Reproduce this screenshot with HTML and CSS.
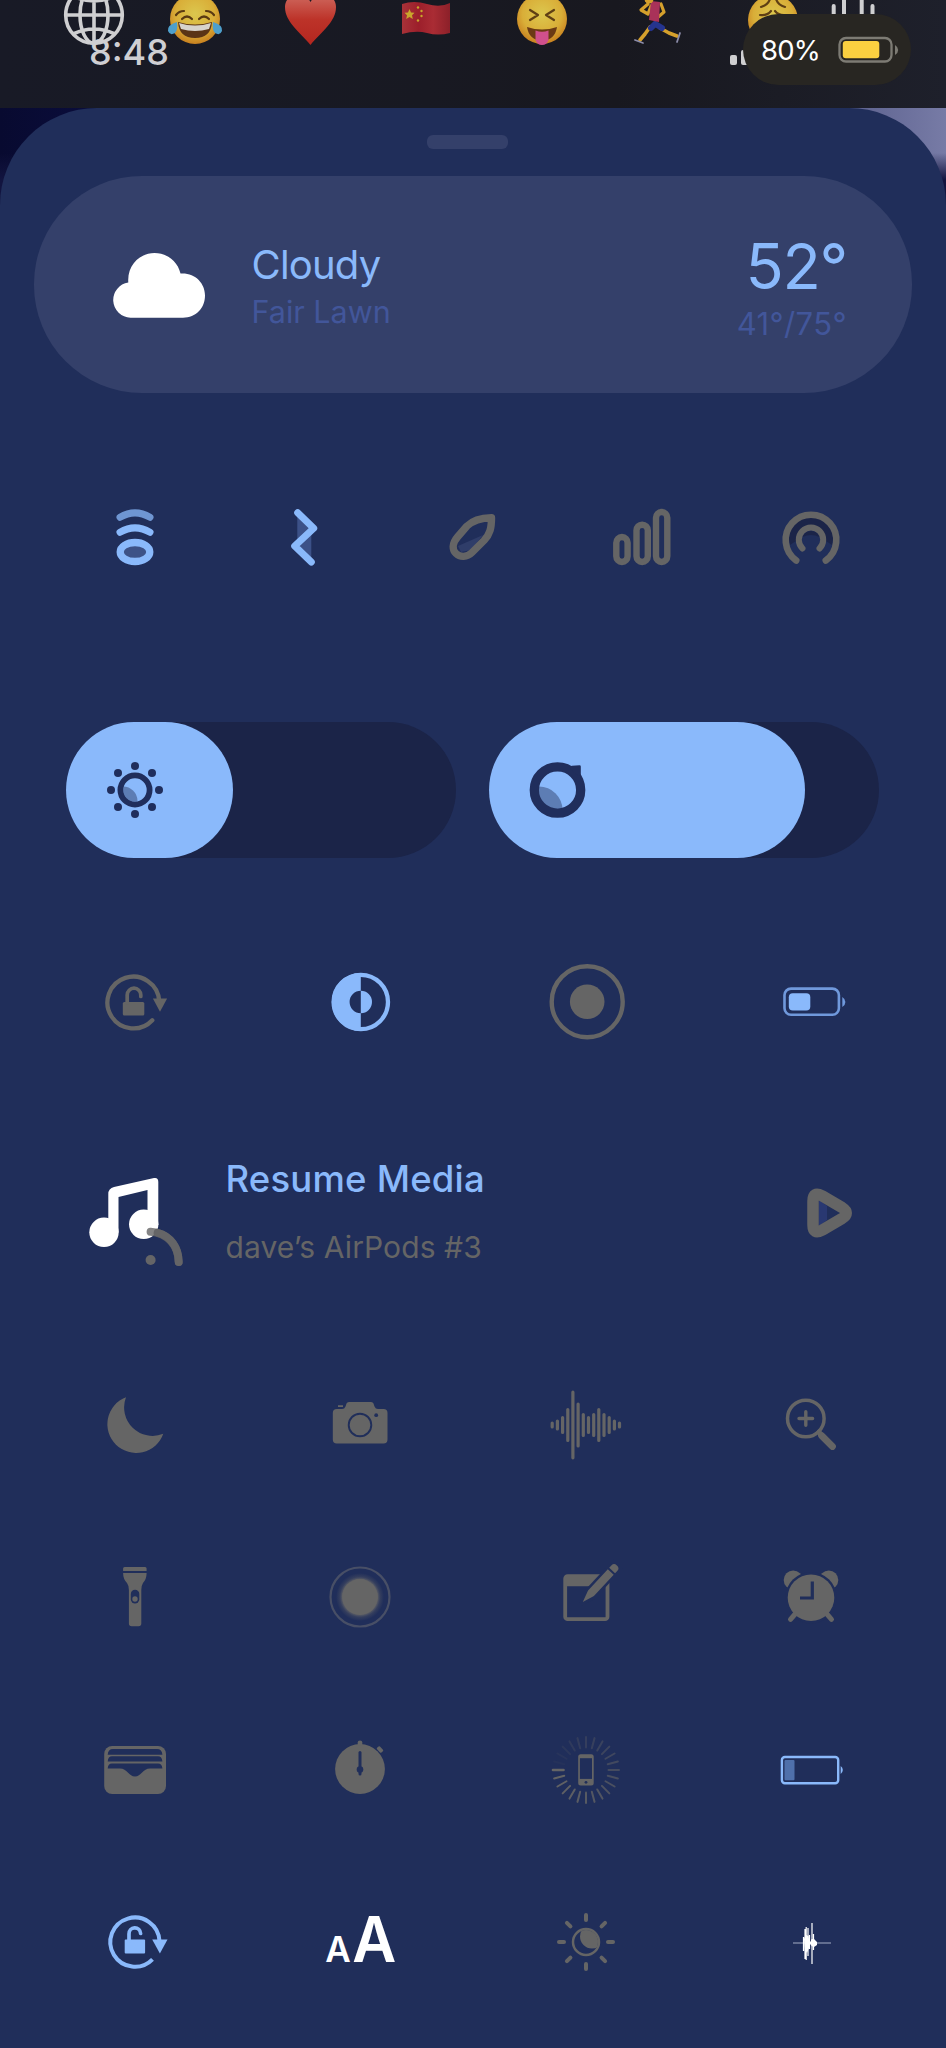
FILE: index.html
```html
<!DOCTYPE html>
<html lang="en">
<head>
<meta charset="utf-8">
<title>Control Center</title>
<link rel="stylesheet" href="styles.css">
</head>
<body>
<div class="screen">
  <header class="topbar">
    <svg class="emoji-strip" width="946" height="85" viewBox="0 0 946 85">
      <defs>
        <radialGradient id="face" cx=".5" cy=".4" r=".6"><stop offset="0" stop-color="#dcc74e"/><stop offset=".65" stop-color="#d9ae38"/><stop offset="1" stop-color="#c8801f"/></radialGradient>
        <linearGradient id="heart" x1="0" y1="0" x2="0" y2="1"><stop offset="0" stop-color="#cf6a60"/><stop offset=".5" stop-color="#bd3329"/><stop offset="1" stop-color="#b3261f"/></linearGradient>
        <linearGradient id="flag" x1="0" y1="0" x2="1" y2="0"><stop offset="0" stop-color="#a83238"/><stop offset=".35" stop-color="#9c1f2b"/><stop offset=".65" stop-color="#aa2c34"/><stop offset="1" stop-color="#8c2029"/></linearGradient>
      </defs>
      <g fill="none" stroke="#cfcfd1" stroke-width="3.6">
        <circle cx="94" cy="15" r="28.3"/>
        <ellipse cx="94" cy="15" rx="14" ry="28.3"/>
        <path d="M94 -14V43M65 15H123M73 34Q94 24 115 34M73 -4Q94 6 115 -4"/>
      </g>
      <circle cx="195" cy="19" r="25" fill="url(#face)"/>
      <path d="M178 22Q195 27 212 22Q211 38 195 38Q179 38 178 22Z" fill="#5a3416"/>
      <path d="M179 23Q195 28 211 23L209 29Q195 33 181 29Z" fill="#d7d3cc"/>
      <g fill="none" stroke="#5a3a12" stroke-width="2.2" stroke-linecap="round"><path d="M182 19Q187 14 192 19M199 19Q204 14 209 19M176 15Q179 11 184 11M206 11Q211 11 214 15"/></g>
      <path d="M177 22Q167 25 168 31Q170 36 175 33Q178 30 177 22ZM213 22Q223 25 222 31Q220 36 215 33Q212 30 213 22Z" fill="#4e9fcb"/>
      <path d="M310.500 45C300 32 285 22 285 7C285 -6 303 -12 310.500 2C318 -12 336 -6 336 7C336 22 321 32 310.500 45Z" fill="url(#heart)"/>
      <path d="M402 4Q414 0 427 4T450 3V33Q438 36 427 33T402 34Z" fill="url(#flag)"/>
      <path d="M409.500 9L411 12.500L414.500 12.800L412 15.200L412.800 19L409.500 17L406.200 19L407 15.200L404.500 12.800L408 12.500Z" fill="#c9a62c"/>
      <g fill="#c9a62c"><circle cx="418" cy="7.500" r="1.200"/><circle cx="421.500" cy="11" r="1.200"/><circle cx="421.500" cy="16" r="1.200"/><circle cx="418" cy="20.500" r="1.200"/></g>
      <circle cx="542" cy="19" r="25" fill="url(#face)"/>
      <path d="M527 27Q542 32 557 27Q555 40 542 41Q529 40 527 27Z" fill="#6b3a14"/>
      <path d="M535.500 30.500Q542 33 548.500 30.500V40Q547 45 542 45Q537 45 535.500 40Z" fill="#d0508c"/>
      <path d="M530 10L538 15L530 20M554 10L546 15L554 20" fill="none" stroke="#5f3f14" stroke-width="2.200" stroke-linecap="round" stroke-linejoin="round"/>
      <g fill="none" stroke-linecap="round" stroke-linejoin="round">
        <path d="M648 4L641 10L648 14L651 6M661 4L664 12L657 18" stroke="#d5a02c" stroke-width="3.200"/>
        <path d="M650 27L645 34L640 40M660 28L669 33L677 36" stroke="#d5a02c" stroke-width="3.600"/>
        <path d="M655 24L651 28M657 25L662 28" stroke="#25348e" stroke-width="6"/>
        <path d="M635 40L643 43M680 33L677 42" stroke="#8b8ba8" stroke-width="1.800"/>
      </g>
      <path d="M651 1L660 2L659 22L649 20Z" fill="#a93259"/><circle cx="649" cy="-1" r="4.500" fill="#d5a02c"/>
      <circle cx="773" cy="20" r="25" fill="url(#face)"/>
      <path d="M761 7Q768 5 770 -1M785 7Q778 5 776 -1M760 15Q767 16 771 11M786 15Q779 16 775 11" fill="none" stroke="#5f3f14" stroke-width="2.200" stroke-linecap="round"/>
      <path d="M833.700 6V30M844 -4V30M861.700 -4V30M872.500 6V30" stroke="#cfcfd1" stroke-width="4" stroke-linecap="round"/>
    </svg>
    <div class="clock">8:48</div>
    <div class="power">
      <svg class="cell" width="24" height="16" viewBox="0 0 24 16"><rect x="0" y="6" width="7" height="10" rx="2"/><rect x="11" y="1" width="7" height="15" rx="2"/></svg>
      <div class="pill">
        <span>80%</span>
        <svg width="62" height="28" viewBox="0 0 62 28"><rect x="2.500" y="2" width="52" height="23.500" rx="6.500" fill="none" stroke="#7d7b74" stroke-width="2.300"/><rect x="5.800" y="5" width="36.500" height="17.300" rx="3" fill="#fbd040"/><path d="M58 9Q61.200 11 61.200 14T58 19Z" fill="#7d7b74"/></svg>
      </div>
    </div>
  </header>

  <div class="wallpaper">
  <main class="sheet">
    <div class="handle"></div>

    <section class="weather">
      <svg width="94" height="66" viewBox="112 251 94 66"><path d="M130.500 316.700A17.700 17.700 0 0 1 128.300 281.500C127 264 140 252 154.500 252C167 252 177.500 260 180.500 272.500C195 271.500 205 282 205 294.500C205 307 196 316.700 183 316.700Z" fill="#fff"/></svg>
      <div class="place"><div class="condition">Cloudy</div><div class="town">Fair Lawn</div></div>
      <div class="temps"><div class="now">52°</div><div class="range">41°/75°</div></div>
    </section>

    <section class="connections">
      <svg class="icon on" viewBox="-40 -40 80 80"><g fill="none" stroke="currentColor" stroke-width="7" stroke-linecap="round"><path d="M-15 -19.700Q0 -28.500 15 -19.700" opacity=".75"/><path d="M-15 -4.700Q0 -13.500 15 -4.700"/><ellipse cx="0" cy="15" rx="14.800" ry="9.500" stroke-width="7.300" fill="#3d5287"/></g></svg>
      <svg class="icon on" viewBox="-40 -40 80 80"><path d="M-6.700 -22L9 -8.700L-6.700 6ZM7.300 -6V24L-9 9Z" fill="#3c5188"/><path d="M-6.300 -24.300L9.700 -8.700L-9.300 9L7.300 25" fill="none" stroke="currentColor" stroke-width="7" stroke-linecap="round" stroke-linejoin="round"/></svg>
      <svg class="icon" viewBox="-40 -40 80 80"><path d="M-15 9L10 -2L-2 13L-12 15Z" fill="#2f3d69"/><path d="M18.500 -19.300C8 -19 0 -17 -6 -11L-15.500 0C-21.500 7 -20.500 13 -17 16.500C-13 20.500 -6 20.500 -1 15.500L11 3.500C17 -3 18.500 -9 18.500 -19.300Z" fill="none" stroke="currentColor" stroke-width="7.400" stroke-linejoin="round"/></svg>
      <svg class="icon" viewBox="-40 -40 80 80"><g fill="none" stroke="currentColor" stroke-width="6.400"><rect x="-25.700" y="0" width="11.300" height="25" rx="5.650"/><rect x="-5.500" y="-12.300" width="11.300" height="37.300" rx="5.650"/><rect x="14" y="-25" width="11.300" height="50" rx="5.650"/></g></svg>
      <svg class="icon" viewBox="-40 -40 80 80"><path d="M-21 8A22 22 0 1 1 21 8L15 4A15 15 0 0 0 -15 4Z" fill="#1b2448"/><path d="M-8.500 0A9 9 0 0 1 8.500 0Q0 -4 -8.500 0Z" fill="#1b2448"/><g fill="none" stroke="currentColor" stroke-width="6.600" stroke-linecap="round"><path d="M-14.800 23.500A25.300 25.300 0 1 1 14.800 23.500"/><path d="M-8.500 11.500A12.200 12.200 0 1 1 8.500 11.500" stroke-width="6"/></g></svg>
    </section>

    <section class="sliders">
      <div class="slider"><div class="level" style="width:167px">
        <svg class="icon" viewBox="-40 -40 80 80"><clipPath id="sunc"><circle r="11.700"/></clipPath><circle cx="-12" cy="11" r="14.500" fill="#5d7db4" clip-path="url(#sunc)"/><circle r="14.600" fill="none" stroke="currentColor" stroke-width="5.800"/><g fill="currentColor"><circle cy="-24" r="4"/><circle cy="24" r="4"/><circle cx="-24" r="4"/><circle cx="24" r="4"/><circle cx="-17" cy="-17" r="4"/><circle cx="17" cy="-17" r="4"/><circle cx="-17" cy="17" r="4"/><circle cx="17" cy="17" r="4"/></g></svg>
      </div></div>
      <div class="slider"><div class="level" style="width:316px">
        <svg class="icon" viewBox="-40 -40 80 80"><clipPath id="volc"><circle r="18.700"/></clipPath><circle cx="-18" cy="20" r="23.500" fill="#5d7db4" clip-path="url(#volc)"/><circle cx=".5" r="23.200" fill="none" stroke="currentColor" stroke-width="9.300"/><path d="M12 -23L15 -24.200L22.500 -24.800Q23.800 -24.800 23.800 -23.500V-13L17 -17Z" fill="currentColor"/></svg>
      </div></div>
    </section>

    <section class="grid toggles">
      <svg class="icon" viewBox="-40 -40 80 80"><path d="M24.200 -1A25.900 25.900 0 1 0 17.300 18.200" fill="none" stroke="currentColor" stroke-width="4.300" stroke-linecap="round"/><path d="M17.900 -3.500H32.100L25 9.800Z" fill="currentColor"/><rect x="-12.200" y="0" width="21.500" height="13.600" rx="1.500" fill="currentColor"/><path d="M-7.800 1V-7A6.800 6.800 0 0 1 5.800 -7V-5.500" fill="none" stroke="currentColor" stroke-width="3.700" stroke-linecap="round"/></svg>
      <svg class="icon on" viewBox="-40 -40 80 80"><g transform="translate(.8 0)"><circle r="27.200" fill="none" stroke="currentColor" stroke-width="4.300"/><path d="M0 -29A29 29 0 0 0 0 29V11.200A11.200 11.200 0 0 1 0 -11.200ZM0 -11.200A11.200 11.200 0 0 1 0 11.200Z" fill="currentColor"/></g></svg>
      <svg class="icon" viewBox="-40 -40 80 80"><circle cx="1.200" cy="-.3" r="35.500" fill="none" stroke="currentColor" stroke-width="4.400"/><circle cx="1.200" cy="-.3" r="17.300" fill="currentColor"/></svg>
      <svg class="icon on" viewBox="-40 -40 80 80"><rect x="-26.500" y="-13.400" width="54.400" height="26.200" rx="6.500" fill="none" stroke="#7099dc" stroke-width="2.600"/><rect x="-22.200" y="-8.800" width="21.500" height="17.300" rx="4" fill="currentColor"/><path d="M31.300 -5Q34.400 -3 34.400 0T31.300 5Z" fill="#7099dc"/></svg>
    </section>

    <section class="media">
      <svg width="104" height="104" viewBox="84 1169 104 104"><g fill="#fff"><circle cx="104" cy="1232.300" r="14.700"/><circle cx="143.700" cy="1224.300" r="14.700"/><path d="M108.300 1232V1194Q108.300 1188.500 114 1187L154 1178Q158.300 1177.200 158.300 1182V1225H147.500V1190L118.500 1197V1232Z"/></g><path d="M150.600 1231.700C168 1233 178.500 1246 178.700 1262" fill="none" stroke="#656567" stroke-opacity=".8" stroke-width="8" stroke-linecap="round"/><path d="M157.500 1232.800C171 1236 178.500 1248 178.700 1262" fill="none" stroke="#656567" stroke-width="7.800" stroke-linecap="round"/><circle cx="150.600" cy="1260" r="5" fill="#656567"/></svg>
      <div class="track"><div class="title">Resume Media</div><div class="device">dave’s AirPods #3</div></div>
      <svg class="icon" viewBox="-40 -40 80 80"><path d="M-11 -13V13L-3 7V-7Z" fill="#293871"/><path d="M-17 -12Q-17 -22 -8 -17.200L12 -5.500Q20.500 0 12 5.500L-8 17.200Q-17 22 -17 12Z" fill="none" stroke="currentColor" stroke-width="11.500" stroke-linejoin="round"/></svg>
    </section>

    <section class="grid shortcuts">
      <svg class="icon" viewBox="-40 -40 80 80"><path d="M-9 -27.800A28.800 28.800 0 1 0 28.300 8.800A28.500 28.500 0 0 1 -9 -27.800Z" fill="currentColor"/></svg>
      <svg class="icon" viewBox="-40 -40 80 80"><path d="M-22 -16H-18Q-15.500 -16 -14.500 -18.500L-13.500 -21.500Q-13 -23 -11 -23H11Q13 -23 13.500 -21.500L14.500 -18.500Q15.500 -16 18 -16H23.500Q27.500 -16 27.500 -12V14.500Q27.500 18.500 23.500 18.500H-23.200Q-27.200 18.500 -27.200 14.500V-12Q-27.200 -16 -23.200 -16ZM-22 -18V-19.800H-17V-18Z" fill="currentColor"/><circle r="11.300" fill="none" stroke="#202e5a" stroke-width="1.900"/><circle cx="16.200" cy="-9.800" r="1.900" fill="#202e5a"/></svg>
      <svg class="icon" viewBox="-40 -40 80 80"><path d="M-33.800 -2V2M-28.600 -4V4M-23.400 -7.500V7.500M-18.200 -15.500V15.500M-13.100 -32.800V32.800M-7.900 -21V21M-2.700 -10.500V10.500M2.500 -7.500V7.500M7.700 -10.500V10.500M12.800 -15.500V15.500M18 -10.500V10.500M23.200 -7.500V7.500M28.400 -4V4M33.500 -2V2" stroke="currentColor" stroke-width="3.200" stroke-linecap="round"/></svg>
      <svg class="icon" viewBox="-40 -40 80 80"><g fill="none" stroke="currentColor" stroke-linecap="round"><circle cx="-5.200" cy="-6.500" r="18.300" stroke-width="3.500"/><path d="M-12 -6.500H1.600M-5.200 -13.300V.3" stroke-width="3.400"/><path d="M8 7L12 12" stroke-width="5"/><path d="M10.500 10.500L21.500 21.500" stroke-width="6.800"/></g></svg>

      <svg class="icon" viewBox="-40 -40 80 80"><path d="M-11.900 -26V-28.500Q-11.900 -30 -10.400 -30H10.100Q11.600 -30 11.600 -28.500V-26ZM-11.900 -24H11.600Q11.600 -18 8 -14Q6.300 -11.500 6.300 -7V26.500Q6.300 29.300 3.500 29.300H-3.300Q-6.100 29.300 -6.100 26.500V-7Q-6.100 -11.500 -8 -14Q-11.900 -18 -11.900 -24Z" fill="currentColor"/><rect x="-4.200" y="-7.300" width="8.500" height="13.700" rx="4.200" fill="#202e5a"/><circle cx="0" cy="2" r="2.700" fill="currentColor"/></svg>
      <svg class="icon" viewBox="-40 -40 80 80"><defs><radialGradient id="glow"><stop offset=".74" stop-color="#656567" stop-opacity=".8"/><stop offset=".84" stop-color="#656567" stop-opacity=".3"/><stop offset="1" stop-color="#656567" stop-opacity="0"/></radialGradient></defs><circle r="29.500" fill="none" stroke="#484f66" stroke-width="2.200"/><circle r="24" fill="url(#glow)"/><circle r="17.900" fill="currentColor"/></svg>
      <svg class="icon" viewBox="-40 -40 80 80"><rect x="-20.800" y="-20.800" width="42.300" height="43" rx="2.500" fill="none" stroke="currentColor" stroke-width="3.800"/><path d="M-21 -21H21V-10.700H-21Z" fill="currentColor"/><g transform="translate(-3.200 5) rotate(43)"><path d="M-2 3L-6.500 -11V-52H6.500V-11L2 3Z" fill="#202e5a"/><path d="M0 0L-4 -12V-41H4V-12ZM-4 -43V-46.500Q-4 -50 0 -50T4 -46.500V-43Z" fill="currentColor"/></g></svg>
      <svg class="icon" viewBox="-40 -40 80 80"><circle cx="-17.800" cy="-17" r="9.500" fill="currentColor"/><circle cx="17.800" cy="-17" r="9.500" fill="currentColor"/><circle cy=".7" r="25.700" fill="#202e5a"/><path d="M-15 16L-20.500 22.300M15 16L20.500 22.300" stroke="currentColor" stroke-width="5" stroke-linecap="round"/><circle cy=".7" r="23.300" fill="currentColor"/><path d="M1.300 -15.500V1H-11" fill="none" stroke="#202e5a" stroke-width="3.200"/></svg>

      <svg class="icon" viewBox="-40 -40 80 80"><rect x="-30.800" y="-24" width="61.800" height="48" rx="8" fill="currentColor"/><path d="M-27.300 -15.300Q-27 -21.100 -22 -21.100H22Q27 -21.100 27.400 -15.300ZM-27.300 -8.400Q-27 -13.700 -23 -13.700H23Q27 -13.700 27.400 -8.400ZM-27.300 -1.500Q-27 -6.500 -23 -6.500H23Q27 -6.500 27.400 -1.500H15C8 -1.500 6 6.500 0 6.500C-6 6.500 -8 -1.500 -15 -1.500Z" fill="#202e5a"/></svg>
      <svg class="icon" viewBox="-40 -40 80 80"><g transform="translate(0 .5)"><circle cy="-1.500" r="24.900" fill="currentColor"/><path d="M-2.300 -25V-28Q-2.300 -30 0 -30T2.300 -28V-25Z" fill="currentColor"/><rect x="-3.200" y="-2" width="6.400" height="4" rx="1" transform="translate(20 -21) rotate(47)" fill="currentColor"/><path d="M0 -18V3.500" stroke="#202e5a" stroke-width="3" stroke-linecap="round"/><circle cy="-1" r="3.300" fill="#202e5a"/></g></svg>
      <svg class="icon" viewBox="-40 -40 80 80"><defs><path id="tick" d="M-33 0H-22.500"/></defs><g stroke="currentColor" stroke-width="2" stroke-linecap="round"><use href="#tick" stroke-width="2.600"/><use href="#tick" transform="rotate(-15)" opacity=".97"/><use href="#tick" transform="rotate(-30)" opacity=".94"/><use href="#tick" transform="rotate(-45)" opacity=".91"/><use href="#tick" transform="rotate(-60)" opacity=".88"/><use href="#tick" transform="rotate(-75)" opacity=".84"/><use href="#tick" transform="rotate(-90)" opacity=".8"/><use href="#tick" transform="rotate(-105)" opacity=".75"/><use href="#tick" transform="rotate(-120)" opacity=".71"/><use href="#tick" transform="rotate(-135)" opacity=".67"/><use href="#tick" transform="rotate(-150)" opacity=".63"/><use href="#tick" transform="rotate(-165)" opacity=".58"/><use href="#tick" transform="rotate(180)" opacity=".54"/><use href="#tick" transform="rotate(165)" opacity=".5"/><use href="#tick" transform="rotate(150)" opacity=".46"/><use href="#tick" transform="rotate(135)" opacity=".42"/><use href="#tick" transform="rotate(120)" opacity=".38"/><use href="#tick" transform="rotate(105)" opacity=".34"/><use href="#tick" transform="rotate(90)" opacity=".3"/><use href="#tick" transform="rotate(75)" opacity=".26"/><use href="#tick" transform="rotate(60)" opacity=".22"/><use href="#tick" transform="rotate(45)" opacity=".17"/><use href="#tick" transform="rotate(30)" opacity=".12"/><use href="#tick" transform="rotate(15)" opacity=".07"/></g><rect x="-7.800" y="-15.800" width="15.500" height="31.300" rx="2.500" fill="currentColor"/><rect x="-6.100" y="-11.800" width="12.100" height="20.700" fill="#202e5a"/><circle cy="12.300" r="1.400" fill="#202e5a"/></svg>
      <svg class="icon on" viewBox="-40 -40 80 80"><rect x="-29.100" y="-13" width="56.300" height="26.200" rx="3" fill="none" stroke="currentColor" stroke-width="2.400"/><rect x="-26.500" y="-10" width="10" height="20.300" rx="1" fill="#4f70ab"/><path d="M29.700 -4Q31.800 -2.500 31.800 0T29.700 4Z" fill="currentColor"/></svg>

      <svg class="icon on" viewBox="-40 -40 80 80"><path d="M24.500 -1A24.600 24.600 0 1 0 17.500 17.300" fill="none" stroke="currentColor" stroke-width="4"/><path d="M17.200 -2.500H32.500L24.900 11.500Z" fill="currentColor"/><rect x="-10.300" y="-2.500" width="20.400" height="14" rx="1" fill="currentColor"/><path d="M-6 -1V-8A5.800 5.800 0 0 1 5.600 -8.500" fill="none" stroke="currentColor" stroke-width="3.700" stroke-linecap="round"/></svg>
      <svg class="icon letters" viewBox="-40 -40 80 80"><text x="-34.800" y="20.200" font-size="35" textLength="25.500" lengthAdjust="spacingAndGlyphs">A</text><text x="-7.800" y="20.200" font-size="63" textLength="44" lengthAdjust="spacingAndGlyphs">A</text></svg>
      <svg class="icon" viewBox="-40 -40 80 80"><defs><path id="ray" d="M0 -27V-22" stroke="currentColor" stroke-width="4" stroke-linecap="round"/><clipPath id="disc"><circle r="12"/></clipPath></defs><circle r="13" fill="none" stroke="currentColor" stroke-width="2.500"/><circle cx="6" cy="-5.500" r="12" fill="currentColor" clip-path="url(#disc)"/><use href="#ray"/><use href="#ray" transform="rotate(45)"/><use href="#ray" transform="rotate(90)"/><use href="#ray" transform="rotate(135)"/><use href="#ray" transform="rotate(180)"/><use href="#ray" transform="rotate(225)"/><use href="#ray" transform="rotate(270)"/><use href="#ray" transform="rotate(315)"/></svg>
      <svg class="icon" viewBox="-40 -40 80 80"><path d="M-18 1H20" stroke="#a4acc4" stroke-width="1"/><path d="M-7.500 -5V9M-6 -13V17M-4.800 -15V18M-3 -14V14M-1.500 -7V7M1 -19V22M2.500 -8V8" stroke="#fff" stroke-width="1.200"/><path d="M-7 -3L-5 -7L-2.500 -6L-2 -3L-.5 0L.5 -3L3 -3L6 0V3L3 5L.5 4L-.5 2L-2 6L-4 11L-6 8Z" fill="#fff"/></svg>
    </section>
  </main>
  </div>
</div>
</body>
</html>
```
FILE: styles.css
```css
* { box-sizing: border-box; }

body {
  margin: 0;
  background: #202e5a;
  font-family: Inter, "Liberation Sans", sans-serif;
}

.screen {
  width: 946px;
  height: 2048px;
  overflow: hidden;
}

svg { display: block; flex: none; }

.topbar {
  position: relative;
  display: flex;
  justify-content: space-between;
  height: 108px;
  padding: 14px 35px 0 89px;
  background: linear-gradient(90deg, #181a26, #181922 45%, #18181f 65%, #1e202b);
}

.emoji-strip {
  position: absolute;
  top: 0;
  left: 0;
}

.clock {
  position: relative;
  margin-top: 18px;
  font-size: 36px;
  font-weight: 500;
  line-height: 40px;
  color: #cfcfd3;
}

.power { position: relative; display: flex; }

.cell {
  margin: 35px -11px 0 0;
  fill: #cfcfd1;
}

.pill {
  position: relative;
  display: flex;
  align-items: center;
  justify-content: space-between;
  width: 168px;
  height: 71px;
  padding: 0 12px 0 18px;
  border-radius: 36px;
  background: #282622;
  color: #fff;
  font-size: 27.5px;
  line-height: 30px;
  letter-spacing: -0.8px;
}

.wallpaper {
  background:
    linear-gradient(180deg, transparent 45px, #12143f 72px),
    linear-gradient(90deg, #080a30 0, #0a0d3c 100px, #5d628f 850px, #777ba6 946px);
}

.sheet {
  height: 1940px;
  padding-top: 27px;
  border-radius: 97px 97px 0 0;
  background: #202e5a;
  color: #656565;
}

.handle {
  width: 81px;
  height: 14px;
  margin: 0 0 27px 427px;
  border-radius: 6px;
  background: #34406a;
}

.weather {
  display: flex;
  width: 878px;
  height: 217px;
  margin-left: 34px;
  padding: 0 65px 0 78px;
  border-radius: 108px;
  background: #34406a;
}

.weather > svg { margin-top: 76px; }

.place { margin: 65px auto 0 45.5px; }

.condition {
  font-size: 40px;
  line-height: 48px;
  letter-spacing: -0.8px;
  color: #8ab9fb;
}

.town {
  margin-top: 3px;
  font-size: 30.5px;
  line-height: 40px;
  color: #42569a;
}

.temps { margin-top: 57.5px; text-align: right; }

.now {
  font-size: 63px;
  line-height: 64px;
  letter-spacing: -1.3px;
  color: #8ab9fb;
}

.range {
  margin-top: 6px;
  font-size: 31px;
  line-height: 40px;
  letter-spacing: 0.4px;
  color: #42569a;
}

.icon {
  width: 80px;
  height: 80px;
  color: #656565;
}

.on { color: #8ab9fb; }

.connections {
  display: grid;
  grid-template-columns: repeat(5, 169.2px);
  justify-content: center;
  justify-items: center;
  margin-top: 104px;
}

.sliders {
  display: flex;
  gap: 32.5px;
  margin: 144.5px 0 0 66px;
}

.slider {
  width: 390px;
  height: 136px;
  border-radius: 68px;
  background: #1b2448;
}

.level {
  display: flex;
  align-items: center;
  height: 136px;
  padding-left: 28.5px;
  border-radius: 68px;
  background: #8ab9fb;
}

.level .icon { color: #202e5c; }

.grid {
  display: grid;
  grid-template-columns: repeat(4, 225.5px);
  justify-content: center;
  justify-items: center;
}

.toggles { margin-top: 104.5px; }

.media {
  display: flex;
  height: 104px;
  margin-top: 127px;
  padding: 0 76px 0 84px;
}

.track { margin: -12px auto 0 37.5px; }

.title {
  font-size: 36.5px;
  font-weight: 500;
  line-height: 44px;
  letter-spacing: 0.2px;
  color: #8ab9fb;
}

.device {
  margin-top: 25.5px;
  font-size: 30px;
  line-height: 40px;
  letter-spacing: 0.1px;
}

.media .icon { margin-top: 3.5px; }

.shortcuts {
  row-gap: 92.4px;
  margin-top: 112px;
}

.letters {
  fill: #fff;
  font-weight: 600;
}
```
